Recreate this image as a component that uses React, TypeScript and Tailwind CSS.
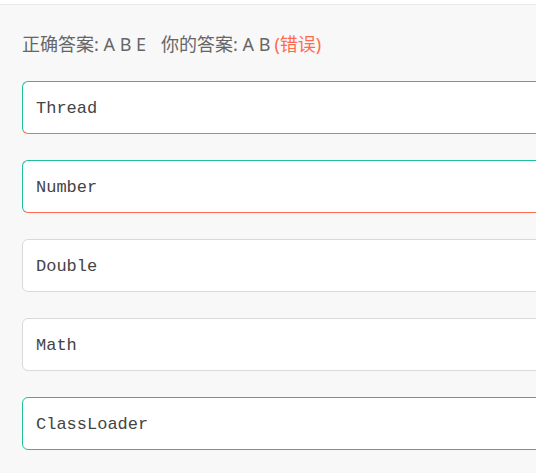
import React from "react";

const options = [
  { text: "Thread", cls: "border-t-[#1fbf9c] border-l-[#1fbf9c] border-b-[#ff6a4d] border-r-[#ff6a4d]" },
  { text: "Number", cls: "border-t-[#1fbf9c] border-l-[#1fbf9c] border-b-[#ff6a4d] border-r-[#ff6a4d]" },
  { text: "Double", cls: "border-[#d9d9d9]" },
  { text: "Math", cls: "border-[#d9d9d9]" },
  { text: "ClassLoader", cls: "border-[#1fbf9c]" },
];

export default function App() {
  return (
    <div className="w-[536px] h-[473px] overflow-hidden bg-white">
      <div className="mt-[4px] h-[469px] border-t border-[#e8e8e8] bg-[#f8f8f8] pl-[22px]">
        <div
          className="mt-[27px] flex items-center text-[18px] leading-[24px] text-[#666666]"
          style={{ fontFamily: '"Noto Sans", "Noto Sans CJK SC", sans-serif' }}
        >
          <span>正确答案: A B E</span>
          <span className="ml-[15px]">你的答案: A B</span>
          <span className="ml-[4px] text-[#ff6a4d]">(错误)</span>
        </div>
        <div className="mt-[25px] flex flex-col gap-[26px]">
          {options.map((o) => (
            <div
              key={o.text}
              className={`w-[560px] h-[53px] rounded-[6px] border bg-white flex items-center pl-[13px] pt-[3px] text-[17px] text-[#444444] ${o.cls}`}
              style={{ fontFamily: '"Liberation Mono", "Courier New", monospace' }}
            >
              {o.text}
            </div>
          ))}
        </div>
      </div>
    </div>
  );
}
